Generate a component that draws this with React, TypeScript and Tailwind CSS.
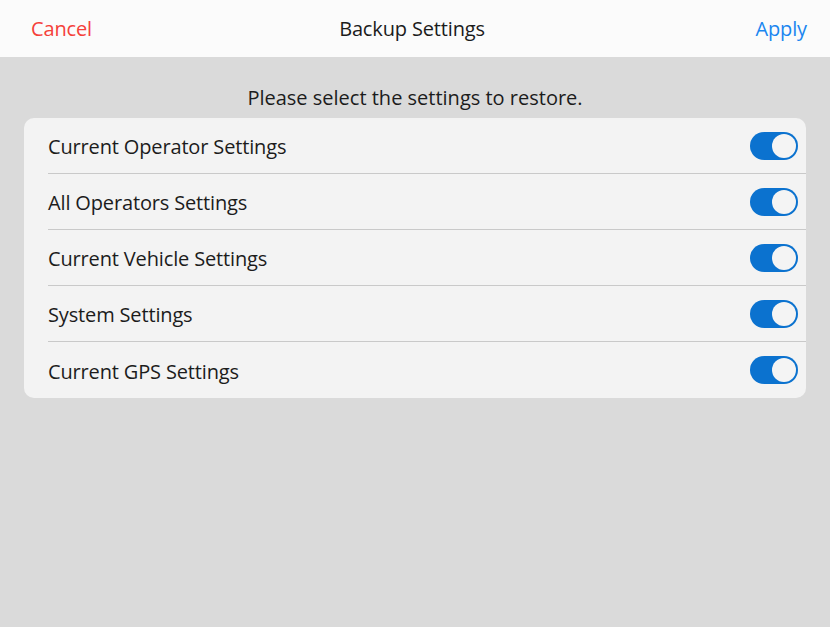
import React, { useState } from 'react';

const items = [
  'Current Operator Settings',
  'All Operators Settings',
  'Current Vehicle Settings',
  'System Settings',
  'Current GPS Settings',
];

const Toggle: React.FC<{ on: boolean; onClick: () => void }> = ({ on, onClick }) => (
  <button
    onClick={onClick}
    className={`w-[48px] h-[28px] rounded-full flex items-center px-[2px] ${on ? 'bg-[#0b72cf] justify-end' : 'bg-[#c8c8c8] justify-start'}`}
  >
    <span className="w-[24px] h-[24px] rounded-full bg-[#f4f4f4]" />
  </button>
);

export default function App() {
  const [state, setState] = useState<boolean[]>(items.map(() => true));

  return (
    <div className="w-[830px] h-[627px] bg-[#dadada] flex flex-col" style={{ fontFamily: '"Open Sans", "Noto Sans", sans-serif' }}>
      <div className="h-[57px] bg-[#fbfbfb] flex items-center justify-between pl-[31px] pr-[23px] text-[20px] tracking-[-0.15px]">
        <span className="text-[#f5403a] w-[80px]">Cancel</span>
        <span className="text-[#1c1c1c] pr-[14px]">Backup Settings</span>
        <span className="text-[#1a86f0] w-[80px] text-right">Apply</span>
      </div>
      <div className="px-[24px]">
        <p className="text-center text-[20px] text-[#1c1c1c] pt-[27px] pb-[6px] leading-[28px]">
          Please select the settings to restore.
        </p>
        <div className="bg-[#f3f3f3] rounded-[10px] pl-[24px]">
          {items.map((label, i) => (
            <div
              key={label}
              className={`h-[56px] flex items-center justify-between pr-[8px] ${i < items.length - 1 ? 'border-b border-[#c9c9c9]' : ''}`}
            >
              <span className="text-[20px] text-[#1c1c1c] tracking-[-0.15px] pt-[3px]">{label}</span>
              <Toggle on={state[i]} onClick={() => setState(s => s.map((v, j) => (j === i ? !v : v)))} />
            </div>
          ))}
        </div>
      </div>
    </div>
  );
}
